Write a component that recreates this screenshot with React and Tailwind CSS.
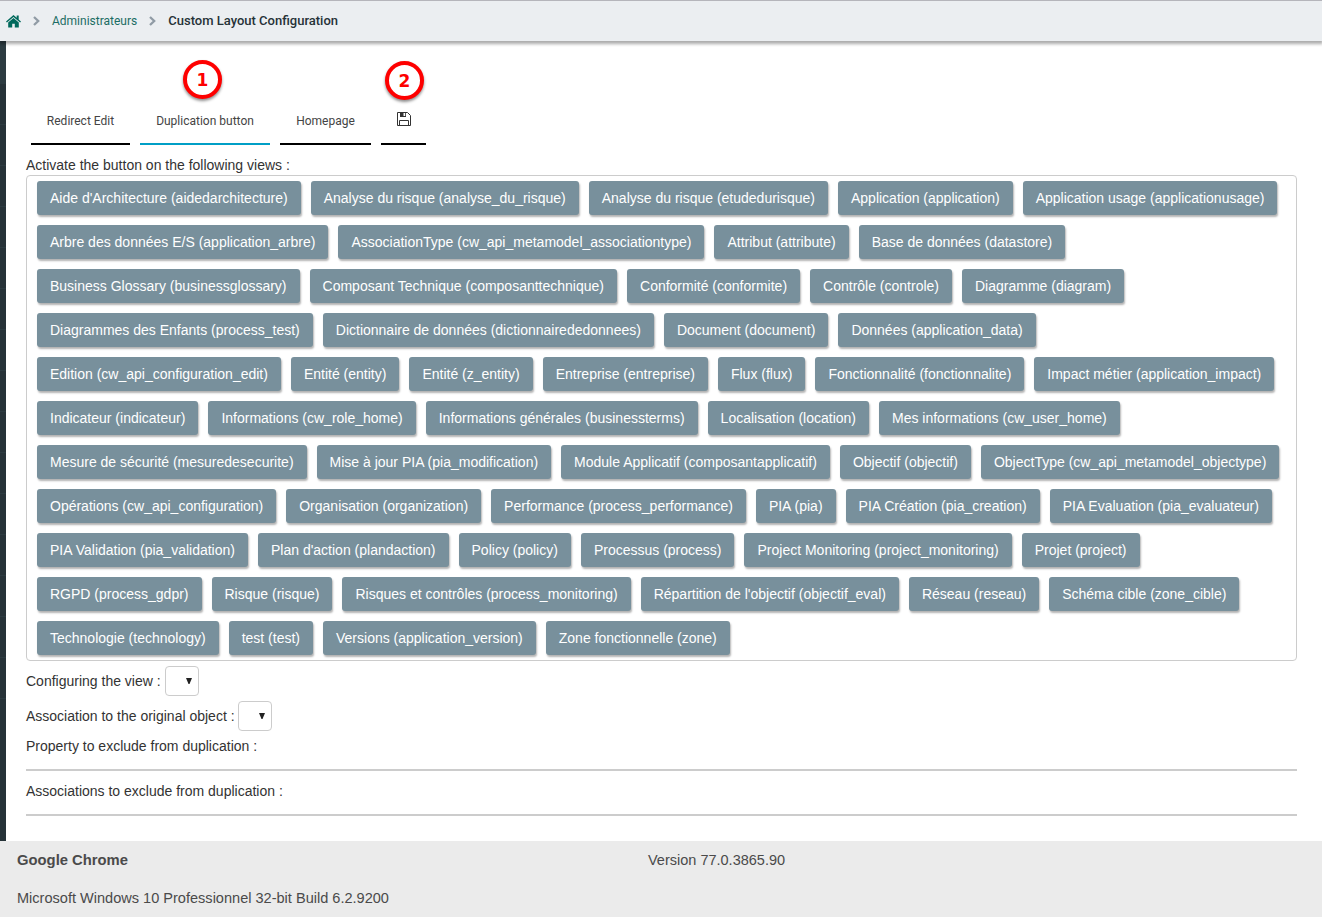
const views = [
  "Aide d'Architecture (aidedarchitecture)", "Analyse du risque (analyse_du_risque)", "Analyse du risque (etudedurisque)", "Application (application)", "Application usage (applicationusage)",
  "Arbre des données E/S (application_arbre)", "AssociationType (cw_api_metamodel_associationtype)", "Attribut (attribute)", "Base de données (datastore)",
  "Business Glossary (businessglossary)", "Composant Technique (composanttechnique)", "Conformité (conformite)", "Contrôle (controle)", "Diagramme (diagram)",
  "Diagrammes des Enfants (process_test)", "Dictionnaire de données (dictionnairededonnees)", "Document (document)", "Données (application_data)",
  "Edition (cw_api_configuration_edit)", "Entité (entity)", "Entité (z_entity)", "Entreprise (entreprise)", "Flux (flux)", "Fonctionnalité (fonctionnalite)", "Impact métier (application_impact)",
  "Indicateur (indicateur)", "Informations (cw_role_home)", "Informations générales (businessterms)", "Localisation (location)", "Mes informations (cw_user_home)",
  "Mesure de sécurité (mesuredesecurite)", "Mise à jour PIA (pia_modification)", "Module Applicatif (composantapplicatif)", "Objectif (objectif)", "ObjectType (cw_api_metamodel_objectype)",
  "Opérations (cw_api_configuration)", "Organisation (organization)", "Performance (process_performance)", "PIA (pia)", "PIA Création (pia_creation)", "PIA Evaluation (pia_evaluateur)",
  "PIA Validation (pia_validation)", "Plan d'action (plandaction)", "Policy (policy)", "Processus (process)", "Project Monitoring (project_monitoring)", "Projet (project)",
  "RGPD (process_gdpr)", "Risque (risque)", "Risques et contrôles (process_monitoring)", "Répartition de l'objectif (objectif_eval)", "Réseau (reseau)", "Schéma cible (zone_cible)",
  "Technologie (technology)", "test (test)", "Versions (application_version)", "Zone fonctionnelle (zone)",
];

function HomeIcon() {
  return (
    <svg width="15" height="13" viewBox="0 0 15 13" fill="#00695c">
      <path d="M7.5 0L0 6.4l.9 1L7.500 1.900l6.600 5.500.9-1-2.300-2V.6h-2v2.100z" />
      <path d="M7.500 3L2.200 7.500V12.500h4V8.700h2.600v3.800h4v-5z" />
    </svg>
  );
}

function Chevron() {
  return (
    <svg width="7" height="10" viewBox="0 0 7 10" fill="none" stroke="#909ba5" strokeWidth="2.3">
      <path d="M1 1l4.200 4L1 9" />
    </svg>
  );
}

function SaveIcon() {
  return (
    <svg width="14" height="14" viewBox="0 0 14 14" fill="none" stroke="#333" strokeWidth="1">
      <path d="M.5.5h10l3 3v10H.5z" />
      <path d="M3 0h6v5H3z" fill="#333" stroke="none" />
      <path d="M6.500 1h1.700v3H6.500z" fill="#fff" stroke="none" />
      <path d="M2.500 13v-4.500h9V13" />
    </svg>
  );
}

function Marker({ n, className }) {
  return (
    <div className={"absolute flex size-[39px] items-center justify-center rounded-full border-4 border-[#fe0000] bg-white pt-px font-['DejaVu_Sans',sans-serif] text-[17px] font-bold text-[#fe0000] shadow-[0_2px_3px_rgba(0,0,0,0.45)] " + className}>
      {n}
    </div>
  );
}

function Tab({ children, className }) {
  return <button className={"relative h-[49px] shrink-0 border-b-2 text-center " + className}>{children}</button>;
}

function Select() {
  return (
    <div className="flex h-[30px] w-[34px] items-center justify-end rounded border border-[#ccc] bg-white pr-[6px]">
      <svg width="6" height="6" viewBox="0 0 6 6" fill="#222"><path d="M0 0h6L3.500 6h-1z" /></svg>
    </div>
  );
}

export default function App() {
  return (
    <div className="flex h-[917px] w-[1322px] flex-col overflow-hidden bg-white font-['Liberation_Sans',Arial,sans-serif] text-sm leading-5 text-[#333]">
      <header className="relative z-10 flex h-[41px] shrink-0 items-center border-t border-[#b5b5bb] bg-[#ebeef1] pl-[6px] font-[Roboto,sans-serif] text-xs shadow-[0_2px_3px_1px_rgba(0,0,0,0.33)]">
        <HomeIcon />
        <span className="ml-3 flex"><Chevron /></span>
        <a className="ml-3 text-[#1b6d64]">Administrateurs</a>
        <span className="ml-3 flex"><Chevron /></span>
        <span className="ml-3 text-[13px] font-medium text-[#263238]">Custom Layout Configuration</span>
      </header>

      <div className="flex h-[800px] shrink-0">
        <aside className="flex w-[6px] shrink-0 flex-col bg-[#263238]">
          <div className="h-[43px] shrink-0 bg-[#2c3b41]" />
          {Array.from({ length: 15 }, (_, i) => (
            <div key={i} className="h-[41px] shrink-0 border-b border-[#2c3b41]" />
          ))}
        </aside>

        <main className="min-w-0 flex-1 pr-[25px] pl-5">
          <nav className="mt-[55px] flex gap-[10px] pl-[5px] font-[Roboto,sans-serif] text-xs text-[#444]">
            <Tab className="w-[99px] border-black pt-0.5">Redirect Edit</Tab>
            <Tab className="w-[130px] border-[#009fc6] pt-0.5">
              Duplication button
              <Marker n="1" className="-top-[36px] left-[43px]" />
            </Tab>
            <Tab className="w-[91px] border-black pt-0.5">Homepage</Tab>
            <Tab className="flex w-[45px] items-center justify-center border-black pb-px">
              <SaveIcon />
              <Marker n="2" className="-top-[35px] left-[4px]" />
            </Tab>
          </nav>

          <p className="mt-[10px]">Activate the button on the following views :</p>
          <div className="flex h-[486px] flex-wrap content-start gap-[10px] rounded border border-[#ccc] px-[10px] py-[5px]">
            {views.map((view) => (
              <button key={view} className="h-[34px] rounded-[3px] bg-[#78909c] px-[13px] whitespace-nowrap text-white shadow-[1px_2px_2px_rgba(0,0,0,0.3)]">
                {view}
              </button>
            ))}
          </div>

          <div className="mt-[5px] flex h-[30px] items-center gap-1"><span>Configuring the view :</span><Select /></div>
          <div className="mt-[5px] flex h-[30px] items-center gap-[3px]"><span>Association to the original object :</span><Select /></div>
          <div className="mt-[5px] h-[35px] border-b-2 border-[#ccc]">Property to exclude from duplication :</div>
          <div className="mt-[10px] h-[35px] border-b-2 border-[#ccc]">Associations to exclude from duplication :</div>
        </main>
      </div>

      <footer className="grid flex-1 grid-cols-[631px_1fr] content-start gap-y-[18px] bg-[#ebebeb] pt-[9px] pl-[17px] text-[14.55px] text-[#4a4a4a]">
        <strong className="text-[14.8px]">Google Chrome</strong>
        <span className="text-[14.500px]">Version 77.0.3865.90</span>
        <span>Microsoft Windows 10 Professionnel 32-bit Build 6.2.9200</span>
      </footer>
    </div>
  );
}
